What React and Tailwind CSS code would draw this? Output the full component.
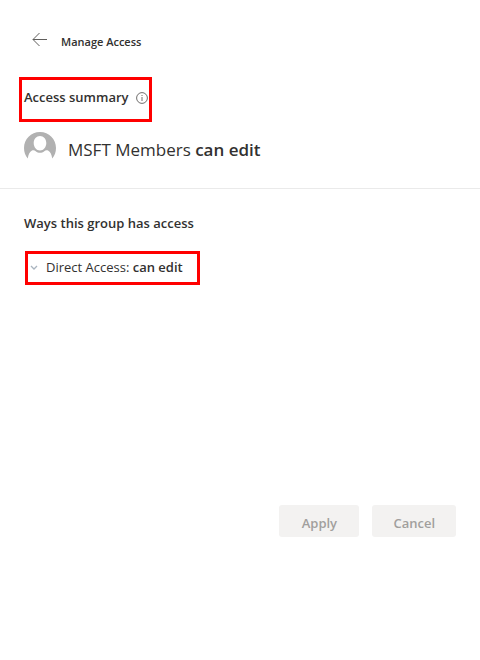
import { useState } from 'react';

function BackIcon() {
  return (
    <svg width="16" height="16" viewBox="0 0 16 16" fill="none" stroke="#605e5c" strokeWidth="1" aria-hidden="true">
      <path d="M1 7.500h14M7.500 1 1 7.500l6.500 6.500" />
    </svg>
  );
}

function InfoIcon() {
  return (
    <svg width="12" height="12" viewBox="0 0 12 12" fill="none" stroke="#605e5c" strokeWidth="0.9" aria-hidden="true">
      <circle cx="6" cy="6" r="5.4" />
      <path d="M6 5v4M6 3v1" />
    </svg>
  );
}

function Avatar() {
  return (
    <svg width="32" height="32" viewBox="0 0 32 32" aria-hidden="true">
      <path
        fill="#b1b1b1"
        fillRule="evenodd"
        d="M16 0C7 0 0 7 0 16c0 4 1.300 7.800 3.800 10.600C4.300 22.800 5.600 19.800 8 18.600c1.200-.6 2.600-.4 3.700.6 2.500 2.200 6.100 2.200 8.600 0 1.100-1 2.500-1.200 3.700-.6 2.400 1.200 3.700 4.200 4.200 8C30.700 23.800 32 20 32 16 32 7 25 0 16 0ZM16 4c3.600 0 6.300 3.100 6.300 7.100S19.600 18.600 16 18.600s-6.300-3.500-6.300-7.500S12.400 4 16 4Z"
      />
    </svg>
  );
}

function App() {
  const [open, setOpen] = useState(false);

  return (
    <main className="min-h-screen bg-white pt-7 font-['Open_Sans','Noto_Sans',sans-serif] text-[#323130]">
      <header className="flex h-6 items-center gap-[13px] px-8">
        <button type="button" aria-label="Back">
          <BackIcon />
        </button>
        <h1 className="pt-1 text-[11px] font-semibold">Manage Access</h1>
      </header>

      <section className="border-b border-[#eaeaea] pb-6">
        <div className="ml-[19px] mt-[25px] flex h-[45px] w-fit items-center gap-[7px] border-3 border-[#ff0000] pb-1 pl-0.5 pr-px">
          <h2 className="text-[13px] font-semibold">Access summary</h2>
          <button type="button" aria-label="More information" className="pt-px">
            <InfoIcon />
          </button>
        </div>
        <div className="mt-2.5 flex items-center gap-3 px-6">
          <Avatar />
          <p className="pt-1 text-[17px] leading-6">
            MSFT Members <strong className="font-semibold">can edit</strong>
          </p>
        </div>
      </section>

      <section className="pt-6">
        <h2 className="px-6 text-[13px] leading-5 font-semibold">Ways this group has access</h2>
        <button
          type="button"
          aria-expanded={open}
          onClick={() => setOpen(!open)}
          className="ml-[25px] mt-[18px] flex h-[34px] items-center gap-2 border-3 border-[#ff0000] pl-0.5 pr-3.5 text-[13px]"
        >
          <svg width="8" height="8" viewBox="0 0 8 8" fill="none" stroke="#a9b4bf" strokeWidth="1.3" aria-hidden="true">
            <path d="m1 2 3 3 3-3" />
          </svg>
          <span>
            Direct Access: <strong className="font-semibold">can edit</strong>
          </span>
        </button>
      </section>

      <footer className="mt-55 flex justify-end gap-[13px] px-6">
        <button type="button" disabled className="h-8 min-w-20 rounded-[3px] bg-[#f3f2f1] px-[21px] pt-1.5 text-[13px] font-semibold text-[#a19f9d]">
          Apply
        </button>
        <button type="button" disabled className="h-8 min-w-20 rounded-[3px] bg-[#f3f2f1] px-[21px] pt-1.5 text-[13px] font-semibold text-[#a19f9d]">
          Cancel
        </button>
      </footer>
    </main>
  );
}

export default App;
